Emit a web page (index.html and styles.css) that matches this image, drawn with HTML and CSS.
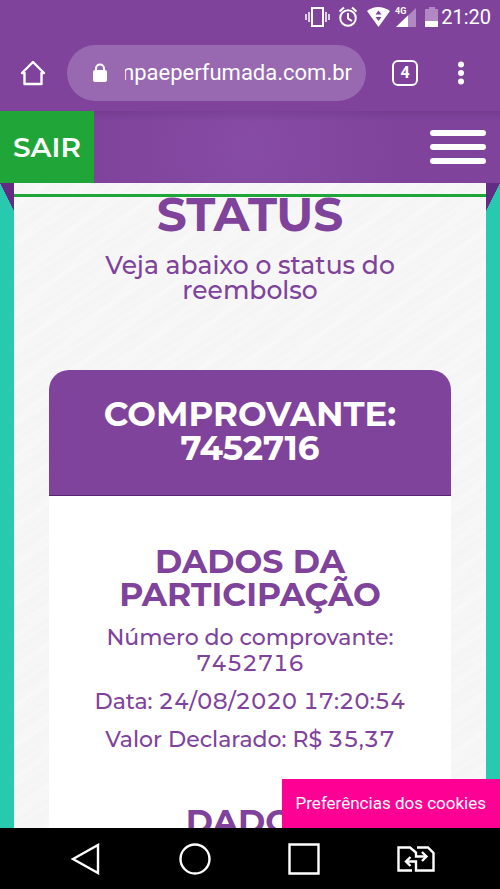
FILE: index.html
```html
<!DOCTYPE html>
<html lang="pt-BR">
<head>
<meta charset="utf-8">
<meta name="viewport" content="width=device-width, initial-scale=1">
<title>Status</title>
<link rel="stylesheet" href="styles.css">
</head>
<body>
<div class="browser">
  <div class="statusbar">
    <svg class="status-icons" width="136" height="24" viewBox="0 0 136 24" aria-hidden="true">
      <g fill="none" stroke="#fff" stroke-width="2">
        <rect x="7" y="3" width="11" height="18" stroke-width="2"/>
        <path d="M4 7v10M21 7v10M1 9v6M24 9v6" stroke-width="1.5"/>
        <circle cx="43" cy="13" r="7.8"/>
        <path d="M43 8v5.500l4 2.500M34.500 6.500l4.500-4M51.500 6.500l-4.500-4"/>
      </g>
      <path fill="#fff" d="M62 6Q73-2 85 6L73.500 22Z"/>
      <path fill="#7f439b" d="M70.500 9.500l3-4 3 4zM70.500 12l3 4 3-4z"/>
      <text class="net" x="90" y="9">4G</text>
      <path fill="#b288c4" d="M91 22L111 3v19z"/>
      <path fill="#fff" d="M91 22l12-11.400V22z"/>
      <path fill="#b288c4" d="M120 4h4V2h6v2h3v14h-13z"/>
      <path fill="#fff" d="M120 16h13v6h-13z"/>
    </svg>
    <span class="clock">21:20</span>
  </div>
  <div class="toolbar">
    <button class="icon-button home" aria-label="Página inicial">
      <svg width="26" height="26" viewBox="0 0 26 26" fill="none" stroke="#fff" stroke-width="2.400" stroke-linejoin="round" stroke-linecap="round"><path d="M4.500 13H2L13 2l11 11h-2.500v11h-17z"/></svg>
    </button>
    <label class="address">
      <svg width="16" height="20" viewBox="0 0 16 20" aria-hidden="true"><path d="M4 8V5.500a4 4 0 0 1 8 0V8" fill="none" stroke="#fff" stroke-width="2"/><rect x="1" y="7" width="14" height="12" rx="2" fill="#fff"/></svg>
      <input class="url" type="text" aria-label="Endereço" value="mpaeperfumada.com.br">
    </label>
    <button class="tabs" aria-label="Abas abertas: 4">4</button>
    <button class="icon-button more" aria-label="Mais opções">
      <svg width="6" height="24" viewBox="0 0 6 24" fill="#fff"><circle cx="3" cy="3.500" r="3"/><circle cx="3" cy="12" r="3"/><circle cx="3" cy="20.500" r="3"/></svg>
    </button>
  </div>
</div>

<header class="site-header">
  <a class="logout" href="#">SAIR</a>
  <button class="menu" aria-label="Menu"><span></span><span></span><span></span></button>
</header>

<div class="viewport">
  <main class="sheet">
    <div class="rule"></div>
    <h1>STATUS</h1>
    <p class="intro">Veja abaixo o status do reembolso</p>
    <article class="card">
      <h2 class="card-title">COMPROVANTE: 7452716</h2>
      <section class="card-body">
        <h3>DADOS DA PARTICIPAÇÃO</h3>
        <p>Número do comprovante: 7452716</p>
        <p>Data: 24/08/2020 17:20:54</p>
        <p>Valor Declarado: R$ 35,37</p>
        <h3 class="next">DADOS</h3>
      </section>
    </article>
  </main>
  <button class="cookies">Preferências dos cookies</button>
</div>

<nav class="android" aria-label="Navegação do sistema">
  <button aria-label="Voltar"><svg width="32" height="32" viewBox="0 0 32 32"><path d="M3 16L28 2v28z"/></svg></button>
  <button aria-label="Início"><svg width="32" height="32" viewBox="0 0 32 32"><circle cx="16" cy="16" r="14.500"/></svg></button>
  <button aria-label="Recentes"><svg width="32" height="32" viewBox="0 0 32 32"><path d="M1.500 1.500h29v29h-29z"/></svg></button>
  <button aria-label="Alternar"><svg width="38" height="26" viewBox="0 0 38 26"><path d="M15 24.500H1.500v-23H13l6 5v4h10M20 1.500h11l5.500 5.500v17.500H19v-9H9"/><path d="M25 6l4.500 4.500L25 15M13.500 11L9 15.500l4.500 4.500"/></svg></button>
</nav>
</body>
</html>
```

FILE: styles.css
```css
* { box-sizing: border-box; margin: 0; padding: 0; }

:root {
  --purple: #7f439b;
  --green: #20a638;
  --teal: #27caae;
}

body {
  display: flex;
  flex-direction: column;
  height: 100vh;
  overflow: hidden;
  background: #000;
  color: var(--purple);
  font-family: Montserrat, Inter, sans-serif;
}

button { border: 0; background: none; color: inherit; }

.browser {
  flex: none;
  background: var(--purple);
  color: #fff;
  font-family: Roboto, sans-serif;
}

.statusbar {
  display: flex;
  justify-content: flex-end;
  align-items: center;
  height: 34px;
  padding-right: 9px;
}

.net { fill: #fff; font: bold 9px Roboto, sans-serif; }
.status-icons { overflow: visible; }
.clock { font-size: 20px; }

.toolbar {
  display: flex;
  align-items: center;
  height: 77px;
  padding: 0 20px;
}

.icon-button { display: flex; flex: none; }
.home { margin-right: 21px; }

.address {
  flex: 1;
  min-width: 0;
  display: flex;
  align-items: center;
  gap: 17px;
  height: 56px;
  padding: 0 14px 0 25px;
  border-radius: 28px;
  background: #9869b0;
}

.address svg { flex: none; }

.url {
  flex: 1;
  min-width: 0;
  border: 0;
  outline: 0;
  background: none;
  color: #fff;
  font: 22px Roboto, sans-serif;
  direction: rtl;
}

.tabs {
  flex: none;
  width: 26px;
  height: 26px;
  margin: 0 40px 0 26px;
  border: 2px solid #fff;
  border-radius: 6px;
  font: bold 16px Roboto, sans-serif;
}

.more { margin-right: 16px; }

.site-header {
  flex: none;
  display: flex;
  justify-content: space-between;
  height: 72px;
  background:
    linear-gradient(rgba(60, 20, 90, 0.15), transparent 10px),
    radial-gradient(circle at 50% 50%, #864ba4, #7f439b 60%);
}

.logout {
  display: flex;
  align-items: center;
  padding: 0 13px;
  background: var(--green);
  color: #fff;
  font-size: 28px;
  font-weight: 600;
  text-decoration: none;
}

.menu {
  display: flex;
  flex-direction: column;
  justify-content: center;
  gap: 8px;
  width: 56px;
  margin-right: 14px;
}

.menu span {
  width: 100%;
  height: 6px;
  border-radius: 3px;
  background: #fff;
}

.viewport {
  flex: 1;
  min-height: 0;
  position: relative;
  overflow: hidden;
  padding: 0 14px;
  background:
    linear-gradient(to top right, transparent 50%, #642b84 51%) left top / 14px 28px no-repeat,
    linear-gradient(to top left, transparent 50%, #642b84 51%) right top / 14px 28px no-repeat,
    var(--teal);
}

.sheet {
  min-height: 100%;
  background:
    repeating-linear-gradient(148deg, rgba(255, 255, 255, 0.2) 0 2px, transparent 4px 9px, rgba(255, 255, 255, 0.15) 11px, transparent 14px 17px),
    repeating-linear-gradient(139deg, transparent 0 14px, rgba(255, 255, 255, 0.2) 19px, transparent 27px),
    #f5f5f5;
  text-align: center;
}

.rule {
  height: 14px;
  border-bottom: 3px solid var(--green);
}

h1 {
  font-size: 47px;
  line-height: 36px;
  font-weight: 700;
}

.intro {
  margin: 20px 80px 0;
  font-size: 25px;
  line-height: 25px;
  font-weight: 500;
}

.card {
  margin: 67px 35px 0;
  border-radius: 20px 20px 0 0;
  background: #fff;
}

.card-title {
  padding: 27px 40px 30px;
  border-bottom: 1px solid #56256f;
  border-radius: 20px 20px 0 0;
  background: var(--purple);
  color: #fff;
  font-size: 34px;
  line-height: 34px;
  font-weight: 700;
}

.card-body { padding: 49px 44px; }

h3 {
  margin-bottom: 14px;
  font-size: 33px;
  line-height: 33px;
  font-weight: 700;
}

.card-body p {
  margin-bottom: 12px;
  font-size: 22px;
  line-height: 26px;
  font-weight: 500;
  font-variant-numeric: tabular-nums;
}

.card-body .next { margin-top: 52px; }

.cookies {
  position: absolute;
  right: 0;
  bottom: 0;
  padding: 15px 14px;
  background: #ff0095;
  color: #fff;
  font: 17px/19px Roboto, sans-serif;
}

.android {
  flex: none;
  display: flex;
  justify-content: space-around;
  align-items: center;
  height: 61px;
  padding: 0 27px 0 31px;
  background: #000;
}

.android button { display: flex; }

.android svg {
  fill: none;
  stroke: #fff;
  stroke-width: 2.4;
}
```
